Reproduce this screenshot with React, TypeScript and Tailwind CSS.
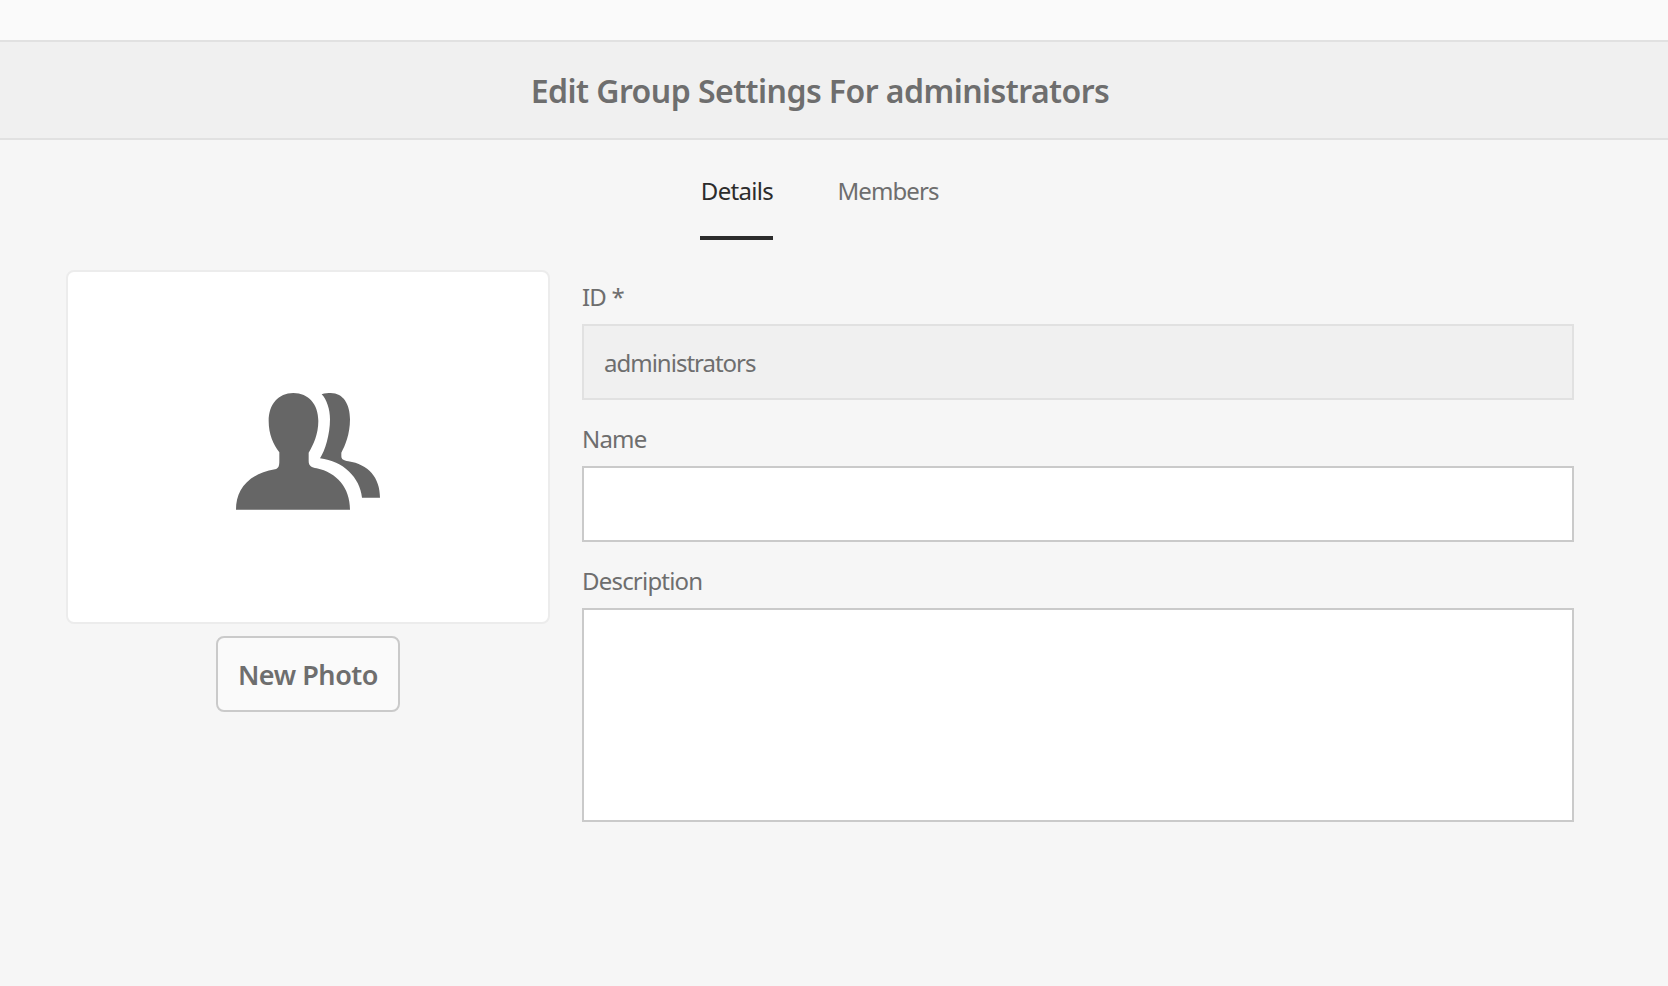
export default function App() {
  return (
    <div className="min-h-screen bg-[#f6f6f6] text-[#6e6e6e] font-['Noto_Sans',sans-serif]">
      <div className="h-[42px] bg-[#fafafa] border-b-2 border-[#e1e1e1]" />
      <header className="h-[98px] bg-[#f0f0f0] border-b-2 border-[#e1e1e1] pr-[28px] pt-[2px] flex items-center justify-center">
        <h1 className="text-[32px] font-semibold leading-none tracking-[-0.55px]">Edit Group Settings For administrators</h1>
      </header>
      <nav className="h-[100px] pr-[29px] flex justify-center gap-[64px] text-[24px] tracking-[-0.9px]">
        <div className="h-full w-[73px] flex items-center justify-center border-b-4 border-[#2c2c2c] text-[#2c2c2c] pt-[6px] tracking-[-0.7px]">
          <span className="leading-none">Details</span>
        </div>
        <div className="h-full flex items-center pt-[6px] pb-[4px]">
          <span className="leading-none">Members</span>
        </div>
      </nav>
      <main className="pt-[30px] pl-[66px] flex gap-[32px]">
        <section className="w-[484px] flex flex-col items-center">
          <div className="w-full h-[354px] bg-white border-2 border-[#ececec] rounded-[8px] flex items-center justify-center">
            <svg width="220" height="160" viewBox="0 0 660 480" className="ml-[4px] mt-[7px]" fill="#666666" aria-hidden="true">
              <path d="M108 416C108 360 140 310 225 295C236 292 238 285 238 270L238 244C220 220 206 190 206 150C206 100 235 66 280 66C326 66 355 100 355 150C355 190 340 222 326 245L326 270C326 285 335 290 350 292C410 305 450 350 450 416Z" />
              <path d="M365 70C375 66 385 66 392 66C430 66 450 100 450 145C450 190 435 225 424 245L424 255C424 265 430 268 445 271C505 280 540 320 540 380L486 380C480 320 430 270 360 262C375 240 390 190 390 145C390 115 380 85 365 70Z" />
            </svg>
          </div>
          <button className="mt-[12px] w-[184px] h-[76px] pt-[3px] bg-[#fafafa] border-2 border-[#cacaca] rounded-[8px] text-[27px] font-semibold tracking-[-0.45px]">
            New Photo
          </button>
        </section>
        <form className="w-[992px] text-[24px] tracking-[-0.8px]">
          <div className="h-[54px] flex items-center">ID *</div>
          <input
            readOnly
            value="administrators"
            className="block w-full h-[76px] px-[20px] bg-[#f0f0f0] border-2 border-[#e1e1e1] outline-none tracking-[-1px]"
          />
          <div className="mt-[12px] h-[54px] flex items-center">Name</div>
          <input className="block w-full h-[76px] px-[20px] bg-white border-2 border-[#cacaca] outline-none" />
          <div className="mt-[12px] h-[54px] flex items-center">Description</div>
          <textarea className="block w-full h-[214px] px-[20px] py-[10px] bg-white border-2 border-[#cacaca] outline-none resize-none" />
        </form>
      </main>
    </div>
  );
}
